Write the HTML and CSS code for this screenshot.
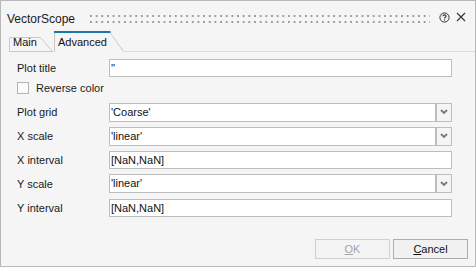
FILE: index.html
```html
<!DOCTYPE html>
<html>
<head>
<meta charset="utf-8">
<link rel="stylesheet" href="styles.css">
</head>
<body>
<div class="window">
  <div class="titlebar">
    <span class="title">VectorScope</span>
    <span class="grip"></span>
    <svg class="help" width="11" height="11" viewBox="0 0 11 11">
      <circle cx="5.5" cy="5.5" r="4.6" fill="none" stroke="#333" stroke-width="1"/>
      <path d="M3.9 4.3 C3.9 2.4 7.1 2.4 7.1 4.2 C7.1 5.3 5.5 5.3 5.5 6.6" fill="none" stroke="#333" stroke-width="1.1"/>
      <rect x="5" y="7.5" width="1.1" height="1.1" fill="#333"/>
    </svg>
    <svg class="close" width="10" height="10" viewBox="0 0 10 10">
      <path d="M1 1 L9 9 M9 1 L1 9" stroke="#333" stroke-width="1.1"/>
    </svg>
  </div>
  <div class="tabstrip">
    <div class="tab tab-main">
      <svg class="tab-shape" width="44" height="15" viewBox="0 0 44 15">
        <path d="M0.5 15 V0.5 H31.5 L43.5 14.5 M0 14.5 H44" fill="none" stroke="#c9c9c9" stroke-width="1"/>
      </svg>
      <span class="tab-label">Main</span>
    </div>
    <div class="tab tab-adv">
      <svg class="tab-shape" width="70" height="21" viewBox="0 0 70 21">
        <path d="M0 0 H56 L70 21 H0 Z" fill="#f5f5f5"/>
        <path d="M0.5 21 V1 M56 1.5 L69.5 20.5" fill="none" stroke="#c9c9c9" stroke-width="1"/>
        <rect x="0" y="0" width="56.5" height="2" fill="#1b78a6"/>
      </svg>
      <span class="tab-label">Advanced</span>
    </div>
    <div class="tab-fill"></div>
  </div>
  <div class="form">
    <label class="lbl">Plot title</label>
    <div class="field">''</div>

    <div class="check-row">
      <span class="checkbox"></span>
      <span class="check-lbl">Reverse color</span>
    </div>

    <label class="lbl">Plot grid</label>
    <div class="combo"><div class="field combo-field">'Coarse'</div><div class="combo-btn"><svg width="8" height="6" viewBox="0 0 8 6"><path d="M1 1 L4 4 L7 1" fill="none" stroke="#777" stroke-width="1.8"/></svg></div></div>

    <label class="lbl">X scale</label>
    <div class="combo"><div class="field combo-field">'linear'</div><div class="combo-btn"><svg width="8" height="6" viewBox="0 0 8 6"><path d="M1 1 L4 4 L7 1" fill="none" stroke="#777" stroke-width="1.8"/></svg></div></div>

    <label class="lbl">X interval</label>
    <div class="field">[NaN,NaN]</div>

    <label class="lbl">Y scale</label>
    <div class="combo"><div class="field combo-field">'linear'</div><div class="combo-btn"><svg width="8" height="6" viewBox="0 0 8 6"><path d="M1 1 L4 4 L7 1" fill="none" stroke="#777" stroke-width="1.8"/></svg></div></div>

    <label class="lbl">Y interval</label>
    <div class="field">[NaN,NaN]</div>
  </div>
  <div class="footer">
    <button class="btn btn-disabled"><u>O</u>K</button>
    <button class="btn"><u>C</u>ancel</button>
  </div>
</div>
</body>
</html>
```

FILE: styles.css
```css
html, body {
  margin: 0;
  padding: 0;
  background: #f5f5f5;
}
body {
  font-family: "Liberation Sans", Arial, sans-serif;
  font-size: 11px;
  color: #1a1a1a;
}
.window {
  box-sizing: border-box;
  width: 476px;
  height: 267px;
  border: 1px solid #b8b8b8;
  background: #f5f5f5;
  display: flex;
  flex-direction: column;
}
.titlebar {
  height: 25px;
  padding-top: 5px;
  padding-left: 6px;
  padding-right: 9px;
  display: flex;
  align-items: center;
}
.title {
  font-size: 12px;
  color: #1a1a1a;
}
.grip {
  flex: 1;
  height: 8px;
  margin-left: 15px;
  margin-right: 9px;
  background-image:
    linear-gradient(90deg, #9c9c9c 0 2px, transparent 2px),
    linear-gradient(90deg, #9c9c9c 0 2px, transparent 2px);
  background-size: 5.67px 2px, 5.67px 2px;
  background-position: 0 0, 0 6px;
  background-repeat: repeat-x;
}
.help {
  margin-right: 6px;
  margin-top: -3px;
}
.close {
  margin-top: -3px;
}
.tabstrip {
  height: 21px;
  display: flex;
  align-items: flex-end;
  padding-left: 8px;
}
.tab {
  position: relative;
  box-sizing: border-box;
}
.tab-shape {
  position: absolute;
  left: 0;
  top: 0;
}
.tab-label {
  position: relative;
  display: block;
  line-height: 11px;
  padding-left: 4px;
  color: #111;
}
.tab-main {
  width: 44px;
  height: 15px;
}
.tab-adv {
  width: 70px;
  height: 21px;
  margin-left: 1px;
  padding-top: 6px;
}
.tab-fill {
  flex: 1;
  height: 0;
  border-bottom: 1px solid #dcdcdc;
}
.form {
  padding: 7px 0 0 16px;
  display: grid;
  grid-template-columns: 92px 343px;
  row-gap: 5.3px;
  align-items: center;
}
.lbl {
  color: #1a1a1a;
}
.field {
  box-sizing: border-box;
  height: 18px;
  border: 1px solid #bdbdbd;
  background: #fff;
  padding-left: 1px;
  line-height: 16px;
  color: #111;
  white-space: nowrap;
}
.check-row {
  grid-column: 1 / 3;
  height: 15px;
  display: flex;
  align-items: flex-start;
}
.checkbox {
  box-sizing: border-box;
  width: 12px;
  height: 12px;
  border: 1px solid #b3b3b3;
  background: #fcfcfc;
}
.check-lbl {
  margin-left: 7px;
  line-height: 13px;
}
.combo {
  display: flex;
  height: 19px;
}
.combo-field {
  flex: 1;
  height: 19px;
  line-height: 17px;
}
.combo-btn {
  box-sizing: border-box;
  width: 16px;
  height: 19px;
  border: 1px solid #bdbdbd;
  background: #f5f5f5;
  display: flex;
  align-items: center;
  justify-content: center;
}
.footer {
  margin-top: auto;
  padding: 0 7px 7px 0;
  display: flex;
  justify-content: flex-end;
  gap: 3px;
}
.btn {
  box-sizing: border-box;
  width: 75px;
  height: 20px;
  border: 1px solid #adadad;
  background: #f1f1f1;
  font-family: "Liberation Sans", Arial, sans-serif;
  font-size: 11px;
  color: #111;
  padding: 0;
  margin: 0;
}
.btn-disabled {
  border-color: #cfcfcf;
  background: #f4f4f4;
  color: #a3a3a3;
}
```
